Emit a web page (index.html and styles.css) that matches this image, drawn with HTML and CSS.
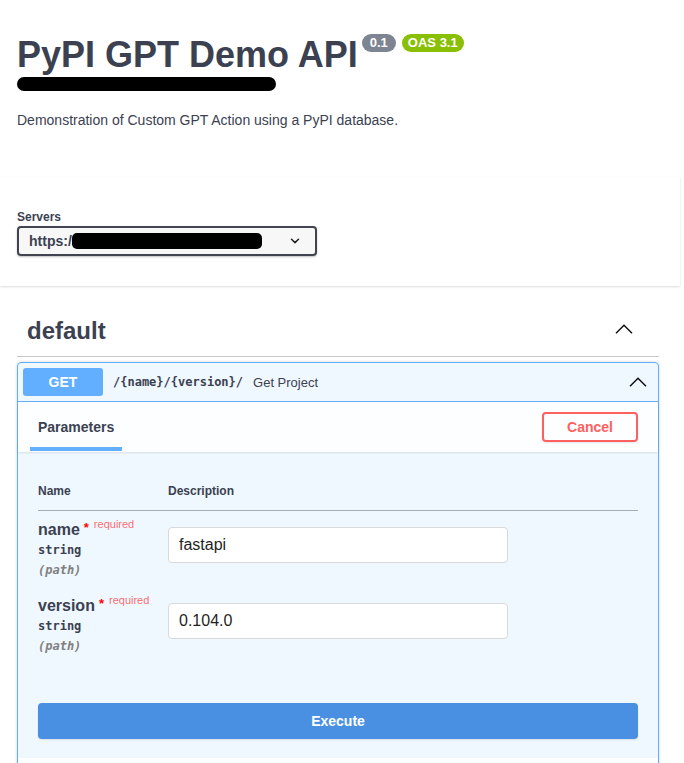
FILE: index.html
```html
<!DOCTYPE html>
<html lang="en">
<head>
<meta charset="utf-8">
<title>PyPI GPT Demo API</title>
<link rel="stylesheet" href="styles.css">
</head>
<body>
<div class="wrapper info">
  <h2 class="title"><span class="title-text">PyPI GPT Demo API</span><span class="badge version">0.1</span><span class="badge oas">OAS 3.1</span></h2>
  <span class="redacted url"></span>
  <p class="desc">Demonstration of Custom GPT Action using a PyPI database.</p>
</div>

<section class="scheme">
  <div class="wrapper">
    <div class="servers-label">Servers</div>
    <div class="select">
      <span class="select-text">https:/</span><span class="redacted host"></span>
      <svg class="select-arrow" width="10" height="6" viewBox="0 0 10 6"><polyline points="1.5,1.2 5,4.6 8.5,1.2" fill="none" stroke="#222" stroke-width="1.5" stroke-linecap="round" stroke-linejoin="round"/></svg>
    </div>
  </div>
</section>

<div class="wrapper ops">
  <h3 class="tag">
    <span class="tag-name">default</span>
    <svg class="tag-arrow" width="18" height="10" viewBox="0 0 18 10"><polyline points="1,9.2 9,1.2 17,9.2" fill="none" stroke="#111" stroke-width="1.5"/></svg>
  </h3>

  <div class="opblock">
    <div class="summary">
      <span class="method">GET</span>
      <span class="path">/{name}/{version}/</span>
      <span class="summary-desc">Get Project</span>
      <svg class="summary-arrow" width="18" height="10" viewBox="0 0 18 10"><polyline points="1,9.2 9,1.2 17,9.2" fill="none" stroke="#111" stroke-width="1.5"/></svg>
    </div>

    <div class="section-header">
      <div class="tab">Parameters</div>
      <button class="cancel">Cancel</button>
    </div>

    <div class="params">
      <div class="param-head"><span>Name</span><span>Description</span></div>

      <div class="param-row">
        <div class="param-info">
          <div class="param-name"><span class="pname">name</span><span class="star">*</span><span class="req">required</span></div>
          <div class="param-type">string</div>
          <div class="param-in">(path)</div>
        </div>
        <div class="param-value"><input class="param-input" type="text" value="fastapi"></div>
      </div>

      <div class="param-row">
        <div class="param-info">
          <div class="param-name"><span class="pname">version</span><span class="star">*</span><span class="req">required</span></div>
          <div class="param-type">string</div>
          <div class="param-in">(path)</div>
        </div>
        <div class="param-value"><input class="param-input" type="text" value="0.104.0"></div>
      </div>
    </div>

    <div class="execute-wrap"><button class="execute">Execute</button></div>

    <div class="section-header responses"></div>
  </div>
</div>
</body>
</html>
```

FILE: styles.css
```css
* { box-sizing: border-box; }

html, body {
  margin: 0;
  padding: 0;
  background: #fff;
}

body {
  font-family: "Liberation Sans", Arial, sans-serif;
  color: #3b4151;
  overflow: hidden;
  height: 763px;
}

.wrapper {
  padding: 0 25px 0 17px;
}

/* info */
.info {
  padding-top: 33px;
}

.title {
  display: flex;
  align-items: flex-start;
  margin: 0;
  font-size: 36px;
  line-height: 44px;
  font-weight: 700;
  color: #3b4151;
}

.badge {
  margin-top: 1px;
  padding: 2px 8px;
  border-radius: 57px;
  font-size: 13px;
  line-height: 14px;
  font-weight: 700;
  color: #fff;
}

.version {
  margin-left: 4px;
  background: #7d8492;
}

.oas {
  margin-left: 6px;
  padding: 2px 6px;
  background: #89bf04;
}

.redacted {
  display: block;
  background: #000;
}

.url {
  width: 259px;
  height: 14px;
  border-radius: 7px;
}

.desc {
  margin: 19px 0 0;
  font-size: 14px;
  line-height: 20px;
}

/* servers */
.scheme {
  margin: 47px 4px 20px 0;
  padding: 32px 0 30px;
  background: #fff;
  box-shadow: 0 1px 2px 0 rgba(0, 0, 0, 0.15);
}

.servers-label {
  font-size: 12px;
  line-height: 16px;
  font-weight: 700;
}

.select {
  display: flex;
  align-items: center;
  width: 300px;
  height: 30px;
  margin-top: 1px;
  padding: 0 15px 0 10px;
  border: 2px solid #41444e;
  border-radius: 4px;
  background: #f7f7f7;
  box-shadow: 0 1px 2px 0 rgba(0, 0, 0, 0.25);
}

.select-text {
  font-size: 14px;
  font-weight: 700;
  color: #3b4151;
}

.host {
  width: 190px;
  height: 16px;
  border-radius: 5px;
}

.select-arrow {
  margin-left: auto;
}

/* tag */
.tag {
  display: flex;
  align-items: center;
  margin: 0 0 5px;
  padding: 10px 26px 10px 10px;
  border-bottom: 1px solid rgba(59, 65, 81, 0.3);
  font-size: 24px;
  line-height: 30px;
  font-weight: 700;
}

.tag-name {
  flex: 1;
}

.tag-arrow {
  margin-bottom: 5px;
}

/* opblock */
.opblock {
  border: 1px solid #61affe;
  border-radius: 4px;
  background: rgba(97, 175, 254, 0.1);
  box-shadow: 0 0 3px rgba(0, 0, 0, 0.19);
}

.summary {
  display: flex;
  align-items: center;
  padding: 5px;
  border-bottom: 1px solid #61affe;
}

.method {
  min-width: 80px;
  padding: 6px 0;
  border-radius: 3px;
  background: #61affe;
  color: #fff;
  font-size: 14px;
  line-height: 16px;
  font-weight: 700;
  text-align: center;
}

.path {
  padding: 0 10px;
  font-family: "DejaVu Sans Mono", "Liberation Mono", monospace;
  font-size: 12px;
  font-weight: 600;
  color: #3b4151;
}

.summary-desc {
  flex: 1;
  font-size: 13px;
  color: #3b4151;
}

.summary-arrow {
  margin-right: 6px;
}

.section-header {
  display: flex;
  justify-content: space-between;
  min-height: 50px;
  padding: 0 20px 0 12px;
  background: rgba(255, 255, 255, 0.8);
  box-shadow: 0 1px 2px rgba(0, 0, 0, 0.1);
}

.tab {
  display: flex;
  align-items: center;
  padding: 5px 8px 0;
  margin-bottom: 1px;
  border-bottom: 4px solid #61affe;
  font-size: 14px;
  font-weight: 700;
}

.cancel {
  align-self: center;
  height: 30px;
  padding: 0 23px;
  border: 2px solid #ff6060;
  border-radius: 4px;
  background: transparent;
  color: #ff6060;
  font-family: "Liberation Sans", Arial, sans-serif;
  font-size: 14px;
  font-weight: 700;
  box-shadow: 0 1px 2px rgba(0, 0, 0, 0.1);
}

/* parameters */
.params {
  padding: 20px 20px 0;
}

.param-head {
  display: grid;
  grid-template-columns: 130px 1fr;
  padding: 12px 0;
  border-bottom: 1px solid rgba(59, 65, 81, 0.4);
  font-size: 12px;
  line-height: 14px;
  font-weight: 700;
}

.param-row {
  display: grid;
  grid-template-columns: 130px 1fr;
}

.param-info {
  padding: 9px 0 7px;
}

.param-name {
  font-size: 16px;
  line-height: 20px;
  white-space: nowrap;
}

.pname {
  font-weight: 700;
}

.star {
  margin-left: 4px;
  color: #f00;
  font-size: 13px;
  line-height: 0;
  font-weight: 700;
  vertical-align: 3px;
}

.req {
  padding-left: 5px;
  font-size: 11px;
  line-height: 0;
  color: rgba(255, 0, 0, 0.6);
  vertical-align: 7px;
}

.param-type,
.param-in {
  font-family: "DejaVu Sans Mono", "Liberation Mono", monospace;
  font-size: 12px;
  line-height: 20px;
  font-weight: 600;
}

.param-in {
  color: #808080;
  font-style: italic;
}

.param-value {
  padding-top: 16px;
}

.param-input {
  display: block;
  width: 340px;
  height: 36px;
  padding: 0 10px;
  border: 1px solid #d9d9d9;
  border-radius: 4px;
  background: #fff;
  color: #1f1f1f;
  font-family: "Liberation Sans", Arial, sans-serif;
  font-size: 16px;
}

.execute-wrap {
  padding: 40px 20px 19px;
}

.execute {
  display: block;
  width: 100%;
  height: 36px;
  border: 2px solid #4990e2;
  border-radius: 4px;
  background: #4990e2;
  color: #fff;
  font-family: "Liberation Sans", Arial, sans-serif;
  font-size: 14px;
  font-weight: 700;
  box-shadow: 0 1px 2px rgba(0, 0, 0, 0.1);
}

.responses {
  padding: 8px 20px;
}
```
